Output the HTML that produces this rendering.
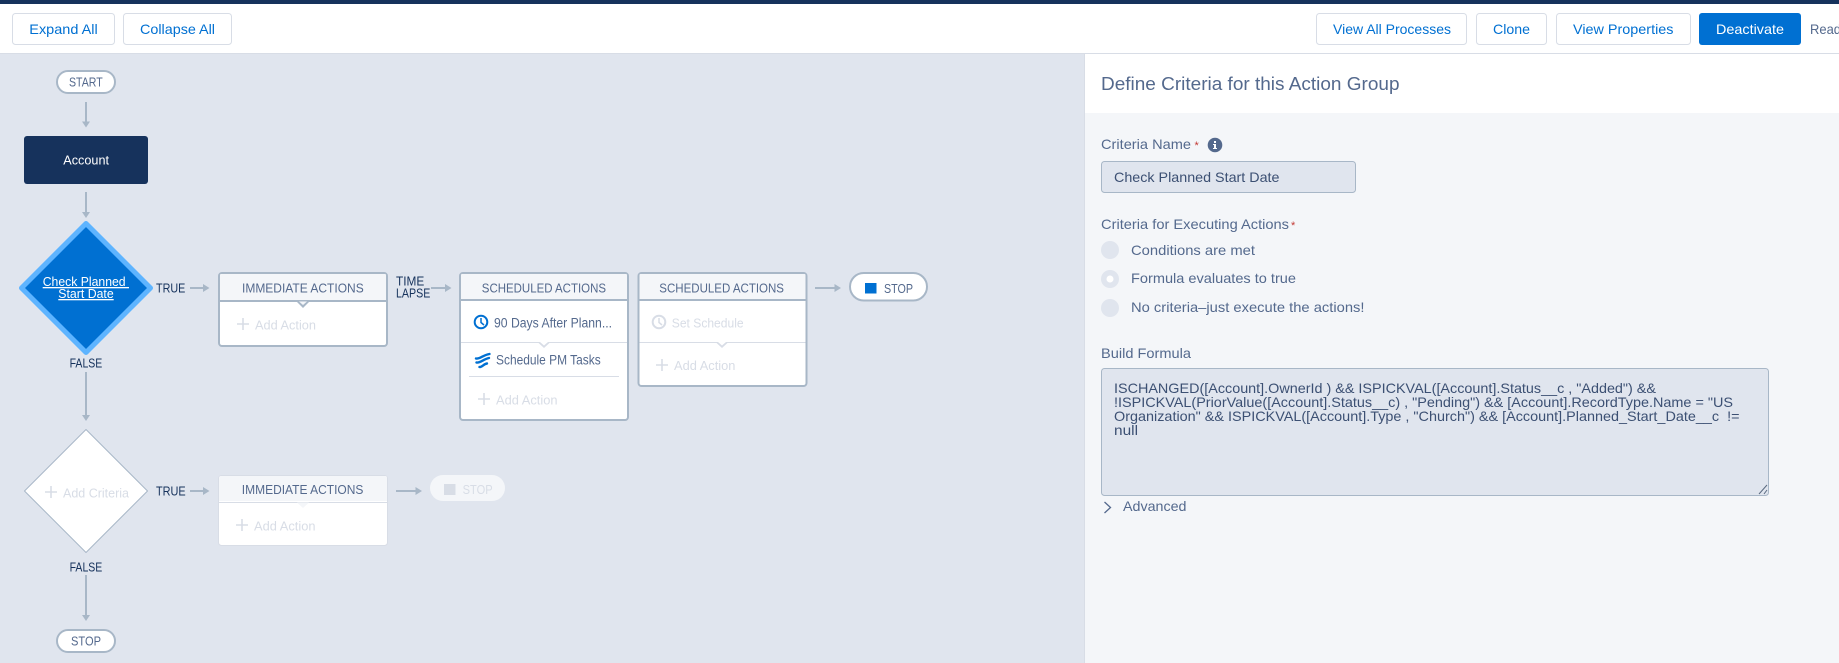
<!DOCTYPE html>
<html><head><meta charset="utf-8"><title>Process Builder</title>
<style>
html,body{margin:0;padding:0;width:1839px;height:663px;overflow:hidden;background:#fff}
svg{display:block}
text{font-family:"Liberation Sans",sans-serif;white-space:pre}
.b{font-size:14px;fill:#0070d2}
.l{font-size:13px;fill:#16325c}
.h{font-size:13px;fill:#54698d}
.g{font-size:13px;fill:#d8dde6}
.s{font-size:14px;fill:#54698d}
.f{font-size:14px;fill:#3c5073}
.a{fill:none;stroke:#a8b7c7;stroke-width:2}
.ah{fill:#a8b7c7}
.p{stroke:#d8dde6;stroke-width:1.6;fill:none}
.box{fill:#fff;stroke:#a8b7c7;stroke-width:2}
.hd{fill:#f4f6f9}
.btn{fill:#fff;stroke:#d8dde6;stroke-width:1}
</style></head><body>
<svg width="1839" height="663" viewBox="0 0 1839 663" xmlns="http://www.w3.org/2000/svg">
<rect width="1839" height="663" fill="#e0e5ee"/>
<!-- top bars -->
<rect width="1839" height="4" fill="#16325c"/>
<rect y="4" width="1839" height="49" fill="#fff"/>
<rect y="53" width="1839" height="1" fill="#d8dde6"/>
<!-- toolbar buttons -->
<rect class="btn" x="12.5" y="13.5" width="102" height="31" rx="3"/>
<text class="b" x="29.3" y="34" textLength="68.4" lengthAdjust="spacingAndGlyphs">Expand All</text>
<rect class="btn" x="123.5" y="13.5" width="108" height="31" rx="3"/>
<text class="b" x="140" y="34" textLength="75" lengthAdjust="spacingAndGlyphs">Collapse All</text>
<rect class="btn" x="1316.5" y="13.5" width="150" height="31" rx="3"/>
<text class="b" x="1333" y="34" textLength="118" lengthAdjust="spacingAndGlyphs">View All Processes</text>
<rect class="btn" x="1476.5" y="13.5" width="70" height="31" rx="3"/>
<text class="b" x="1493" y="34" textLength="37" lengthAdjust="spacingAndGlyphs">Clone</text>
<rect class="btn" x="1556.5" y="13.5" width="134" height="31" rx="3"/>
<text class="b" x="1573" y="34" textLength="100.5" lengthAdjust="spacingAndGlyphs">View Properties</text>
<rect x="1699" y="13" width="102" height="32" rx="3" fill="#0070d2"/>
<text class="b" x="1716" y="34" textLength="68" lengthAdjust="spacingAndGlyphs" style="fill:#fff">Deactivate</text>
<text class="s" x="1810" y="34" textLength="31" lengthAdjust="spacingAndGlyphs">Read</text>

<!-- right panel -->
<rect x="1084" y="54" width="755" height="609" fill="#f4f6f9"/>
<rect x="1084" y="54" width="755" height="59" fill="#fff"/>
<rect x="1084" y="54" width="1" height="609" fill="#d8dde6"/>
<text x="1101" y="90" font-size="18" fill="#54698d" textLength="298.5" lengthAdjust="spacingAndGlyphs">Define Criteria for this Action Group</text>
<text class="s" x="1101" y="149" textLength="90" lengthAdjust="spacingAndGlyphs">Criteria Name</text>
<text x="1194.5" y="149" font-size="11" fill="#c23934">*</text>
<circle cx="1215" cy="145" r="7.3" fill="#54698d"/>
<rect x="1214" y="141" width="2" height="2" fill="#fff"/>
<rect x="1214" y="144" width="2" height="5" fill="#fff"/>
<rect x="1213" y="144" width="2" height="1" fill="#fff"/>
<rect x="1213" y="148" width="4" height="1" fill="#fff"/>
<rect x="1101.5" y="161.5" width="254" height="31" rx="3" fill="#e0e5ee" stroke="#a8b7c7"/>
<text class="f" x="1114" y="182" textLength="165.5" lengthAdjust="spacingAndGlyphs">Check Planned Start Date</text>
<text class="s" x="1101" y="229" textLength="188" lengthAdjust="spacingAndGlyphs">Criteria for Executing Actions</text>
<text x="1291" y="229" font-size="11" fill="#c23934">*</text>
<circle cx="1110" cy="250" r="9" fill="#e0e5ee"/>
<circle cx="1110" cy="279" r="9" fill="#e0e5ee"/>
<circle cx="1110" cy="279" r="3.5" fill="#fff"/>
<circle cx="1110" cy="308" r="9" fill="#e0e5ee"/>
<text class="s" x="1131" y="255" textLength="124" lengthAdjust="spacingAndGlyphs">Conditions are met</text>
<text class="s" x="1131" y="283" textLength="165" lengthAdjust="spacingAndGlyphs">Formula evaluates to true</text>
<text class="s" x="1131" y="312" textLength="233.5" lengthAdjust="spacingAndGlyphs">No criteria–just execute the actions!</text>
<text class="s" x="1101" y="358" textLength="90" lengthAdjust="spacingAndGlyphs">Build Formula</text>
<rect x="1101.5" y="368.5" width="667" height="127" rx="3" fill="#e0e5ee" stroke="#a8b7c7"/>
<text class="f" x="1114" y="393" textLength="542" lengthAdjust="spacingAndGlyphs">ISCHANGED([Account].OwnerId ) &amp;&amp; ISPICKVAL([Account].Status__c , "Added") &amp;&amp;</text>
<text class="f" x="1114" y="407" textLength="619" lengthAdjust="spacingAndGlyphs">!ISPICKVAL(PriorValue([Account].Status__c) , "Pending") &amp;&amp; [Account].RecordType.Name = "US</text>
<text class="f" x="1114" y="421" textLength="625.5" lengthAdjust="spacingAndGlyphs">Organization" &amp;&amp; ISPICKVAL([Account].Type , "Church") &amp;&amp; [Account].Planned_Start_Date__c  !=</text>
<text class="f" x="1114" y="435" textLength="24" lengthAdjust="spacingAndGlyphs">null</text>
<path d="M1759 494l8-9M1764 494l3-4" stroke="#5a6a80" stroke-width="1" fill="none"/>
<path d="M1104.5 502l6 5.5-6 5.5" fill="none" stroke="#54698d" stroke-width="1.3"/>
<text class="s" x="1123" y="511" textLength="63.5" lengthAdjust="spacingAndGlyphs">Advanced</text>

<!-- left column -->
<rect x="57" y="71" width="58" height="22" rx="11" fill="#fff" stroke="#a8b7c7" stroke-width="2"/>
<text class="h" x="69" y="86.5" textLength="33.7" lengthAdjust="spacingAndGlyphs">START</text>
<path class="a" d="M86 102v22"/><path class="ah" d="M82 121.5h8l-4 6z"/>
<rect x="24" y="136" width="124" height="48" rx="3" fill="#16325c"/>
<text x="63.3" y="164.5" font-size="13" fill="#fff" textLength="45.7" lengthAdjust="spacingAndGlyphs">Account</text>
<path class="a" d="M86 192v23"/><path class="ah" d="M82 212h8l-4 6z"/>

<path d="M86 223.500L150.500 288L86 352.500L21.500 288Z" fill="#0070d2" stroke="#5eb4ff" stroke-width="5" stroke-linejoin="round"/>
<text x="42.7" y="286" font-size="13" fill="#fff" text-decoration="underline" textLength="86.3" lengthAdjust="spacingAndGlyphs">Check Planned </text>
<text x="58.3" y="298" font-size="13" fill="#fff" text-decoration="underline" textLength="55.4" lengthAdjust="spacingAndGlyphs">Start Date</text>

<text class="l" x="156" y="292.5" textLength="29.3" lengthAdjust="spacingAndGlyphs">TRUE</text>
<path class="a" d="M190 288h14"/><path class="ah" d="M203 284l6.500 4-6.500 4z"/>

<!-- immediate 1 -->
<rect class="box" x="219" y="273" width="168" height="73" rx="3"/>
<path class="hd" d="M220 275a1 1 0 0 1 1-1h164a1 1 0 0 1 1 1v25H220z"/>
<rect x="219" y="300" width="168" height="2" fill="#a8b7c7"/>
<path d="M297 302h12l-6 6z" fill="#a8b7c7"/><path d="M299 301.500h8l-4 3.500z" fill="#f4f6f9"/>
<text class="h" x="242" y="292.5" textLength="121.7" lengthAdjust="spacingAndGlyphs">IMMEDIATE ACTIONS</text>
<path class="p" d="M243 318v12M237 324h12"/>
<text class="g" x="255" y="329.5" textLength="61" lengthAdjust="spacingAndGlyphs">Add Action</text>

<text class="l" x="396" y="285.5" textLength="28.3" lengthAdjust="spacingAndGlyphs">TIME</text>
<text class="l" x="396" y="297.5" textLength="34.3" lengthAdjust="spacingAndGlyphs">LAPSE</text>
<path class="a" d="M431 288h15"/><path class="ah" d="M445 284l6.500 4-6.500 4z"/>

<!-- scheduled 1 -->
<rect class="box" x="460" y="273" width="168" height="147" rx="3"/>
<path class="hd" d="M461 275a1 1 0 0 1 1-1h164a1 1 0 0 1 1 1v25H461z"/>
<rect x="460" y="299" width="168" height="2" fill="#a8b7c7"/>
<text class="h" x="481.8" y="292.5" textLength="124.2" lengthAdjust="spacingAndGlyphs">SCHEDULED ACTIONS</text>
<circle cx="481" cy="322" r="6.3" fill="none" stroke="#0070d2" stroke-width="2"/>
<path d="M481 318v4.500l3 2.500" fill="none" stroke="#0070d2" stroke-width="1.5"/>
<text class="s" x="494" y="327.5" textLength="118" lengthAdjust="spacingAndGlyphs" style="font-size:13.5px">90 Days After Plann...</text>
<rect x="461" y="342" width="166" height="1" fill="#d8dde6"/>
<path d="M538 342.500h12l-6 5.500z" fill="#d8dde6"/><path d="M540 342h8l-4 3.500z" fill="#fff"/>
<path d="M476 358.500c3.500 1 7-3.500 13.500-4.500M476.500 362.500c3.500 1 7-3.500 12.500-4.500M479.500 367c2.500 0.500 4-3 7.500-3.500" fill="none" stroke="#0070d2" stroke-width="2.4" stroke-linecap="round"/>
<text class="s" x="496" y="364.5" textLength="104.7" lengthAdjust="spacingAndGlyphs" style="font-size:13.5px">Schedule PM Tasks</text>
<rect x="469" y="376" width="150" height="1" fill="#d8dde6"/>
<path class="p" d="M484 393v12M478 399h12"/>
<text class="g" x="496" y="404.5" textLength="61.5" lengthAdjust="spacingAndGlyphs">Add Action</text>

<!-- scheduled 2 -->
<rect class="box" x="638.500" y="273" width="168" height="113" rx="3"/>
<path class="hd" d="M639.500 275a1 1 0 0 1 1-1h164a1 1 0 0 1 1 1v25H639.500z"/>
<rect x="638.500" y="299" width="168" height="2" fill="#a8b7c7"/>
<text class="h" x="659.3" y="292.5" textLength="124.7" lengthAdjust="spacingAndGlyphs">SCHEDULED ACTIONS</text>
<circle cx="659" cy="322" r="6.3" fill="none" stroke="#d8dde6" stroke-width="2"/>
<path d="M659 318v4.500l3 2.500" fill="none" stroke="#d8dde6" stroke-width="1.5"/>
<text class="g" x="671.8" y="327.5" textLength="71.8" lengthAdjust="spacingAndGlyphs">Set Schedule</text>
<rect x="639.500" y="342" width="166" height="1" fill="#d8dde6"/>
<path d="M716 342.500h12l-6 5.500z" fill="#d8dde6"/><path d="M718 342h8l-4 3.500z" fill="#fff"/>
<path class="p" d="M662 359v12M656 365h12"/>
<text class="g" x="674" y="370" textLength="61.4" lengthAdjust="spacingAndGlyphs">Add Action</text>

<path class="a" d="M815 288h20"/><path class="ah" d="M834.500 284l6.500 4-6.500 4z"/>
<rect x="850" y="273" width="77" height="27.500" rx="13.700" fill="#fff" stroke="#a8b7c7" stroke-width="2"/>
<rect x="865" y="283" width="11.500" height="10.500" fill="#0070d2"/>
<text class="h" x="884" y="293" textLength="29" lengthAdjust="spacingAndGlyphs">STOP</text>

<!-- false down -->
<text class="l" x="69.6" y="367.5" textLength="32.7" lengthAdjust="spacingAndGlyphs">FALSE</text>
<path class="a" d="M86 372v44"/><path class="ah" d="M82 415h8l-4 6z"/>

<!-- add criteria diamond -->
<path d="M86 429.500L147.500 491L86 552.500L24.500 491Z" fill="#fff" stroke="#a8b7c7" stroke-width="1" stroke-linejoin="round"/>
<path class="p" d="M51 486v12M45 492h12"/>
<text class="g" x="63" y="497.5" textLength="66" lengthAdjust="spacingAndGlyphs">Add Criteria</text>
<text class="l" x="156" y="495.5" textLength="29.7" lengthAdjust="spacingAndGlyphs">TRUE</text>
<path class="a" d="M190 491h14"/><path class="ah" d="M203 487l6.500 4-6.500 4z"/>

<!-- immediate 2 -->
<rect x="218.500" y="475.500" width="169" height="70" rx="3" fill="#fff" stroke="#d8dde6"/>
<path class="hd" d="M219 478a2 2 0 0 1 2-2h165a2 2 0 0 1 1 2v23H219z"/>
<rect x="219" y="502" width="168" height="1" fill="#d8dde6"/>
<path d="M297 502.500h12l-6 5.500z" fill="#f4f6f9"/>
<text class="h" x="241.8" y="494" textLength="121.6" lengthAdjust="spacingAndGlyphs">IMMEDIATE ACTIONS</text>
<path class="p" d="M242 519v12M236 525h12"/>
<text class="g" x="254" y="530.5" textLength="61.5" lengthAdjust="spacingAndGlyphs">Add Action</text>
<path class="a" d="M396 491h20"/><path class="ah" d="M415.500 487l6.500 4-6.500 4z"/>
<rect x="430" y="475" width="75" height="26" rx="13" fill="#f4f6f9"/>
<rect x="444" y="484" width="11.500" height="11" fill="#d8dde6"/>
<text x="462.6" y="494" font-size="13" fill="#d8dde6" textLength="30" lengthAdjust="spacingAndGlyphs">STOP</text>

<text class="l" x="69.6" y="571.5" textLength="32.7" lengthAdjust="spacingAndGlyphs">FALSE</text>
<path class="a" d="M86 575v41"/><path class="ah" d="M82 615h8l-4 6z"/>
<rect x="57" y="630" width="58" height="22" rx="11" fill="#fff" stroke="#a8b7c7" stroke-width="2"/>
<text class="h" x="71" y="645.5" textLength="30" lengthAdjust="spacingAndGlyphs">STOP</text>
</svg>
</body></html>
